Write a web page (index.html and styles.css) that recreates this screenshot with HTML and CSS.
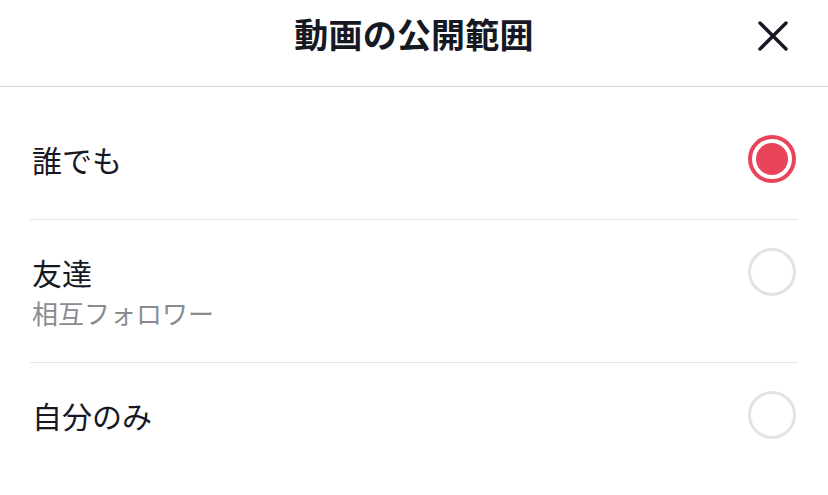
FILE: index.html
```html
<!DOCTYPE html>
<html lang="ja">
<head>
<meta charset="utf-8">
<link rel="stylesheet" href="styles.css">
</head>
<body>
<div class="sheet">
  <header class="header">
    <h1 class="title">動画の公開範囲</h1>
    <button class="close" aria-label="閉じる">
      <svg width="30" height="30" viewBox="0 0 30 30"><path d="M2 2 L28 28 M28 2 L2 28" stroke="#161823" stroke-width="3.4" stroke-linecap="round" fill="none"/></svg>
    </button>
  </header>
  <ul class="list">
    <li class="row">
      <div class="text"><div class="label">誰でも</div></div>
      <span class="radio checked"><span class="dot"></span></span>
    </li>
    <li class="row">
      <div class="text"><div class="label">友達</div><div class="sub">相互フォロワー</div></div>
      <span class="radio"></span>
    </li>
    <li class="row last">
      <div class="text"><div class="label">自分のみ</div></div>
      <span class="radio"></span>
    </li>
  </ul>
</div>
</body>
</html>
```
FILE: styles.css
```css
html, body {
  margin: 0;
  padding: 0;
  background: #ffffff;
}
body {
  font-family: "Noto Sans CJK JP", "Noto Sans", sans-serif;
  color: #161823;
  width: 828px;
  height: 495px;
  overflow: hidden;
}
.header {
  position: relative;
  height: 86px;
  box-sizing: content-box;
  border-bottom: 1px solid #d6d6d8;
  display: flex;
  align-items: flex-start;
  justify-content: center;
}
.title {
  margin: 0;
  padding-top: 14px;
  font-size: 34px;
  font-weight: 700;
  line-height: 40px;
  letter-spacing: 0.2px;
}
.close {
  position: absolute;
  right: 40px;
  top: 21px;
  width: 30px;
  height: 30px;
  padding: 0;
  border: 0;
  background: none;
  display: flex;
}
.list {
  list-style: none;
  margin: 0;
  padding: 20px 0 0;
}
.row {
  margin: 0 30px;
  padding: 28px 0 36px;
  border-bottom: 1px solid #e6e6e8;
  display: flex;
  justify-content: space-between;
  align-items: flex-start;
}
.row.has-sub {
  padding-bottom: 34px;
}
.row.last {
  border-bottom: 0;
}
.text {
  padding-left: 2px;
}
.label {
  font-size: 30px;
  line-height: 48px;
  height: 48px;
}
.sub {
  margin-top: 2px;
  margin-bottom: -2px;
  font-size: 26px;
  line-height: 30px;
  color: #8a8b91;
}
.radio {
  box-sizing: border-box;
  width: 48px;
  height: 48px;
  margin-right: 2px;
  border-radius: 50%;
  border: 3px solid #e3e3e4;
  display: flex;
  align-items: center;
  justify-content: center;
}
.radio.checked {
  border: 4px solid #e8445a;
}
.dot {
  width: 32px;
  height: 32px;
  border-radius: 50%;
  background: #e8445a;
}
```
